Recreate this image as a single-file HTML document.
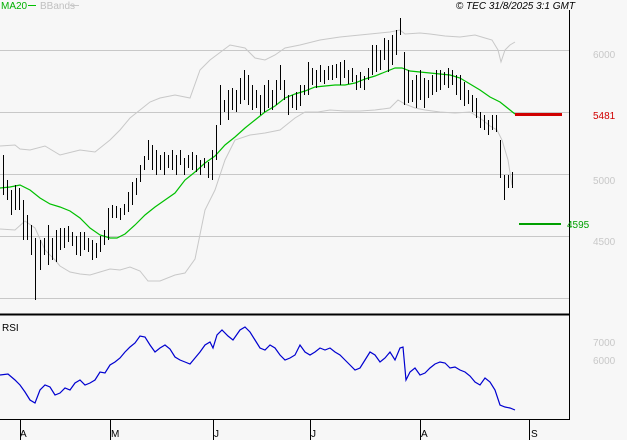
<!DOCTYPE html>
<html><head><style>
body{margin:0;background:#f7f7f7;width:627px;height:440px;overflow:hidden;font-family:"Liberation Sans",sans-serif}
</style></head><body>
<svg width="627" height="440" viewBox="0 0 627 440" xmlns="http://www.w3.org/2000/svg" style="display:block">
<rect width="627" height="440" fill="#f7f7f7"/>
<g stroke="#c8c8c8" stroke-width="1" shape-rendering="crispEdges">
<line x1="0" y1="50.5" x2="569" y2="50.5"/>
<line x1="0" y1="112.5" x2="569" y2="112.5"/>
<line x1="0" y1="174.5" x2="569" y2="174.5"/>
<line x1="0" y1="236.5" x2="569" y2="236.5"/>
<line x1="0" y1="298.5" x2="569" y2="298.5"/>
</g>
<g fill="none" stroke="#c8c8c8" stroke-width="1">
<polyline points="0,146 15,145 20,149 30,150 45,146 60,155 80,150 95,152 110,140 120,130 130,118 140,110 150,102 160,98 175,95 190,98 200,70 210,60 230,45 245,48 255,58 265,60 275,55 285,48 300,45 320,40 340,37 360,35 380,33 390,32 400,30 405,34 420,33 430,34 445,36 460,37 475,35 485,38 492,40 498,50 501,62 505,50 510,45 515,42"/>
<polyline points="0,229 15,230 25,221 35,228 45,250 55,260 60,266 70,272 80,274 90,275 100,272 110,269 120,270 130,267 140,271 148,281 160,281 175,275 185,273 195,259 205,210 215,190 225,160 235,140 250,135 265,133 280,130 295,118 305,112 318,112 330,110 345,111 360,111 375,110 390,108 398,100 405,104 415,108 425,110 440,112 455,113 470,112 480,118 490,126 497,130 502,140 508,160 512,185"/>
</g>
<polyline fill="none" stroke="#00c000" stroke-width="1.2" points="0,188 10,187 20,185 30,190 40,198 50,204 60,207 70,211 80,218 90,228 100,235 110,238 117,238 125,234 135,225 145,215 155,207 165,200 175,193 185,180 195,172 205,163 215,156 225,145 235,137 245,128 255,120 265,112 275,106 285,98 295,94 305,91 315,87 325,86 335,85 345,85 355,83 365,79 375,76 385,72 395,68 402,68 410,71 420,72 430,73 440,74 450,75 460,78 470,84 480,90 490,97 500,102 510,110 515,114"/>
<path transform="translate(0.5,0)" fill="none" stroke="#000" stroke-width="1" d="
M3,155V195 M7,180V200 M11,190V215 M15,185V210 M19,188V210 M23,200V240 M27,215V240 M31,225V255 M35,238V300 M40,240V270 M44,238V255 M48,225V265 M52,238V260 M56,230V262 M60,228V250 M64,228V248 M68,226V242 M72,232V246 M76,236V255 M80,232V256 M84,232V250 M88,238V252 M92,240V260 M96,243V258 M100,236V252 M104,230V245 M108,208V240 M112,205V218 M116,206V218 M120,208V220 M124,204V215 M128,192V212 M132,182V205 M136,178V195 M140,165V182 M144,156V170 M148,140V160 M152,145V170 M156,150V175 M160,155V170 M164,152V175 M168,155V168 M172,150V170 M176,155V175 M180,150V165 M184,158V175 M188,155V168 M192,152V170 M196,155V172 M200,160V175 M204,158V168 M208,162V178 M212,150V180 M216,125V160 M220,85V125 M224,100V112 M228,90V120 M232,88V110 M236,90V112 M240,78V104 M244,70V100 M248,75V105 M252,85V110 M256,90V108 M260,95V115 M264,85V112 M268,80V108 M272,90V110 M276,80V105 M280,65V90 M284,80V100 M288,95V115 M292,95V108 M296,92V110 M300,85V106 M304,85V95 M308,62V95 M312,68V85 M316,70V88 M320,65V82 M324,70V84 M328,66V80 M332,65V80 M336,64V78 M340,62V85 M344,60V78 M348,70V84 M352,68V82 M356,75V90 M360,72V88 M364,76V90 M368,68V80 M372,45V75 M376,45V72 M380,50V70 M384,38V60 M388,40V72 M392,35V65 M396,30V55 M400,18V35 M404,52V105 M408,70V103 M412,80V102 M416,75V108 M420,70V100 M424,78V108 M428,80V98 M432,75V95 M436,70V92 M440,70V90 M444,72V85 M448,68V88 M452,70V85 M456,75V95 M460,75V100 M464,82V106 M468,90V104 M472,95V112 M476,98V118 M480,112V128 M484,115V130 M488,120V135 M492,115V130 M496,115V132 M500,140V178 M504,175V200 M508,175V188 M512,172V188"/>
<path stroke="#000" stroke-width="2" d="M0,314.5H569"/>
<path stroke="#000" stroke-width="1" fill="none" shape-rendering="crispEdges" d="M569.5,10V419.5H0 M20.5,419V440 M110.5,419V440 M213.5,419V440 M310.5,419V440 M420.5,419V440 M529.5,419V440"/>
<rect x="515" y="113" width="47" height="3" fill="#d00000"/>
<rect x="519" y="223" width="42" height="2" fill="#00a000"/>
<polyline fill="none" stroke="#0000d0" stroke-width="1.2" points="0,375 8,374 15,380 20,385 25,392 30,400 35,403 40,390 45,385 50,387 55,395 60,393 65,388 70,390 75,383 80,380 85,385 90,383 95,380 100,372 105,373 110,365 115,362 120,358 125,352 130,347 135,343 140,336 145,337 150,345 155,352 160,348 165,345 170,349 175,357 180,360 185,362 190,364 195,358 200,352 205,345 210,342 213,348 217,335 222,330 228,336 233,340 240,330 245,327 250,332 255,340 260,348 265,350 270,345 275,348 280,355 285,360 290,358 295,355 300,345 305,352 310,355 315,352 320,348 325,350 330,348 335,352 340,355 345,360 350,365 355,370 360,368 365,360 370,352 375,355 380,362 385,358 390,352 395,360 400,348 403,347 406,380 410,372 415,368 420,375 425,373 430,368 435,364 440,362 445,363 450,368 455,367 460,370 465,372 470,376 475,382 480,385 485,378 490,382 495,390 500,405 505,407 510,408 515,410"/>
<g font-size="10" fill="#c8c8c8">
<text x="593" y="58">6000</text>
<text x="593" y="184">5000</text>
<text x="593" y="245">4500</text>
<text x="593" y="346">7000</text>
<text x="593" y="364">6000</text>
</g>
<text x="593" y="119" font-size="10" fill="#d00000">5481</text>
<text x="567" y="228" font-size="10" fill="#00a000">4595</text>
<text x="1" y="9" font-size="10" fill="#00b000">MA20</text>
<line x1="28" y1="5.5" x2="36" y2="5.5" stroke="#00c000"/>
<text x="40" y="9" font-size="10" fill="#c0c0c0">BBands</text>
<line x1="70" y1="5.5" x2="79" y2="5.5" stroke="#c8c8c8"/>
<text x="575" y="9" font-size="10" font-style="italic" fill="#000" text-anchor="end">© TEC 31/8/2025 3:1 GMT</text>
<text x="2" y="331" font-size="10" fill="#000">RSI</text>
<g font-size="10" fill="#000">
<text x="20" y="437">A</text><text x="111" y="437">M</text><text x="214" y="437">J</text><text x="311" y="437">J</text><text x="421" y="437">A</text><text x="531" y="437">S</text>
</g>
</svg>
</body></html>
